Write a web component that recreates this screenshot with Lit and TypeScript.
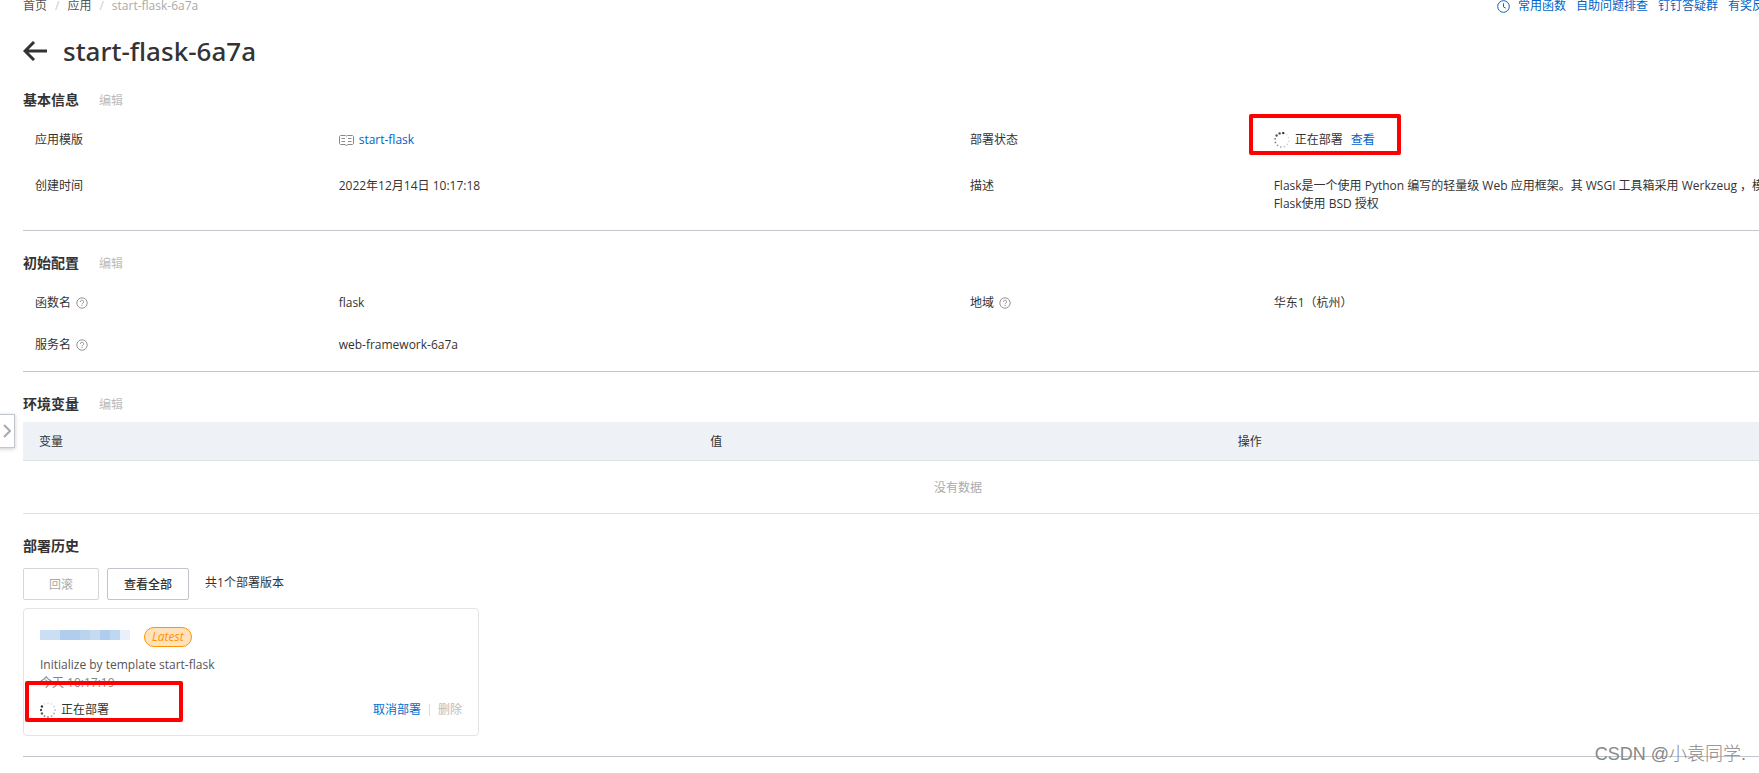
import { LitElement, html, css, svg } from "lit";
import { customElement, property } from "lit/decorators.js";

const DOTS = 12;

@customElement("loading-ring")
class LoadingRing extends LitElement {
  @property({ type: Number }) head = 0;

  static styles = css`
    :host { display: inline-flex; }
    svg { display: block; width: 16px; height: 16px; }
  `;

  render() {
    const dots = Array.from({ length: DOTS }, (_, i) => {
      const angle = ((this.head - i * (360 / DOTS)) * Math.PI) / 180;
      return svg`<circle cx=${8 + 7 * Math.sin(angle)} cy=${8 - 7 * Math.cos(angle)}
        r=${i < 3 ? 1.2 : 0.9} fill="#333" opacity=${Math.max(0.15, 1 - i * 0.1)}></circle>`;
    });
    return html`<svg viewBox="0 0 16 16" aria-hidden="true">${dots}</svg>`;
  }
}

@customElement("help-icon")
class HelpIcon extends LitElement {
  static styles = css`
    :host { display: inline-flex; }
    svg { display: block; width: 12px; height: 12px; }
  `;

  render() {
    return html`<svg viewBox="0 0 12 12" fill="none" stroke="#888" aria-hidden="true">
      <circle cx="6" cy="6" r="5.2" stroke-width="0.9"></circle>
      <path d="M4.4 4.9a1.6 1.6 0 1 1 2.4 1.3c-.5.3-.8.5-.8 1.1" stroke-width="0.9"></path>
      <path d="M6 8.1v1" stroke-width="1"></path>
    </svg>`;
  }
}

@customElement("app-root")
class AppRoot extends LitElement {
  static styles = css`
    :host {
      display: block;
      position: relative;
      overflow: hidden;
      min-height: 100vh;
      background: #fff;
      color: #333;
      font: 12px/18px "Open Sans", "Noto Sans CJK SC", sans-serif;
    }
    * { box-sizing: border-box; }
    a { color: #0064c8; text-decoration: none; }
    button { font: inherit; cursor: pointer; }
    button:disabled { cursor: default; }
    h1, h2, dl, dd, dt, p, ol { margin: 0; padding: 0; font-weight: inherit; }

    .topbar {
      display: flex;
      justify-content: space-between;
      height: 15px;
      align-items: flex-end;
      padding-left: 23px;
      white-space: nowrap;
    }
    .crumbs { display: flex; gap: 8px; list-style: none; color: #aaa; }
    .crumbs a { color: #555; }
    .crumbs .sep { color: #ccc; }
    .help-links { display: flex; align-items: center; gap: 10px; margin-right: -17px; }
    .help-links svg { width: 13px; height: 13px; margin-right: -2px; }

    .page { margin-right: -134px; padding-left: 23px; }
    .title { display: flex; align-items: center; gap: 16px; height: 42px; margin-top: 15px; }
    .title h1 { font-family: "Noto Sans", "Noto Sans CJK SC", sans-serif; font-size: 26px; line-height: 42px; font-weight: 500; }
    .back { display: flex; padding: 0; border: 0; background: none; color: #333; }
    .back svg { width: 24px; height: 20px; }

    .heading { display: flex; align-items: center; gap: 20px; height: 22px; }
    .heading h2 { font-size: 14px; line-height: 22px; font-weight: 700; }
    .plain { padding: 0; border: 0; background: none; color: #bbb; line-height: 18px; }
    .heading .plain { padding-top: 2px; }

    .section { border-bottom: 1px solid #c0c6cc; margin-top: 21px; }
    .section.basic { margin-top: 17px; }
    .section.env { border-bottom: 0; }
    .fields { display: grid; grid-template-columns: 1fr 1fr; }
    .field { display: grid; grid-template-columns: 1fr 2fr; padding: 20px 12px 8px; }
    .basic .fields { padding-bottom: 9px; }
    .config .field { padding: 12px; }
    .config .fields { padding: 8px 0 5px; }
    .label, .value { display: flex; align-items: center; gap: 5px; white-space: nowrap; }
    .field.top .label { align-self: start; }
    .value { position: relative; }
    .value.status { gap: 8px; }
    .mark { position: absolute; border: 4px solid #f00; border-radius: 2px; pointer-events: none; }
    .status .mark { left: -25px; top: -17px; width: 152px; height: 41px; }
    .deploy-state .mark { left: -15px; top: -20px; width: 158px; height: 41px; }
    .state { display: flex; align-items: center; gap: 5px; }
    .book { width: 15px; height: 11px; }

    table { width: 100%; border-collapse: separate; border-spacing: 0; table-layout: fixed; margin-top: 7px; }
    .col-name, .col-action { width: 35.9%; }
    th { height: 39px; padding: 2px 16px 0; background: #eef2f7; font-weight: 400; text-align: left; border-bottom: 1px solid #dfe3e6; }
    td { height: 53px; padding: 2px 0 0; text-align: center; color: #aaa; border-bottom: 1px solid #dfe3e6; }

    .actions { display: flex; gap: 8px; margin-top: 11px; }
    .btn { height: 32px; padding: 2px 16px 0; border: 1px solid #c0c4cc; border-radius: 2px; background: #fff; color: #333; font-weight: 500; }
    .btn:disabled { padding: 2px 25px 0; border-color: #d3d6db; color: #aaa; font-weight: 400; }
    .count { margin: 6px 0 0 8px; }
    .card { width: 456px; margin: 8px 0 20px; padding: 18px 16px 16px; border: 1px solid #e3e4e6; border-radius: 4px; }
    .card-head { display: flex; align-items: center; gap: 14px; }
    .redacted { display: flex; height: 10px; margin-bottom: 4px; }
    .block { width: 10px; }
    .badge { height: 20px; padding: 0 7px; border: 1px solid #ff9300; border-radius: 10px; background: #ffe2bc; color: #ff9300; font-style: italic; }
    .message { margin-top: 9px; color: #555; }
    .time { color: #888; }
    .card-foot { display: flex; justify-content: space-between; align-items: center; margin-top: 9px; }
    .deploy-state { position: relative; }
    .links { display: flex; align-items: center; gap: 8px; }
    .divider { width: 1px; height: 12px; background: #ddd; }
    .cancel { color: #0070cc; }

    .handle { position: absolute; left: -2px; top: 414px; width: 17px; height: 34px; padding: 0; display: flex; align-items: center; justify-content: center; border: 1px solid #c0c6cc; background: #fff; box-shadow: 0 1px 4px #0003; }
    .handle svg { width: 8px; height: 14px; }
    .watermark { position: absolute; right: 13px; bottom: 6px; font: 300 18px/26px "Liberation Sans", "Noto Sans CJK SC", sans-serif; color: #888; }
  `;

  private blocks = ["#cbdff4", "#cbdff4", "#b0cdee", "#b0cdee", "#bad4f0", "#c5daf3", "#b0cdee", "#bfd8f2", "#e7f0fb"];

  private heading(text: string, editable = true) {
    return html`<div class="heading"><h2>${text}</h2>
      ${editable ? html`<button class="plain" disabled>编辑</button>` : ""}</div>`;
  }

  render() {
    return html`
      <header class="topbar">
        <ol class="crumbs">
          <li><a href="#">首页</a></li><li class="sep">/</li>
          <li><a href="#">应用</a></li><li class="sep">/</li>
          <li>start-flask-6a7a</li>
        </ol>
        <nav class="help-links">
          <svg viewBox="0 0 13 13" fill="none" stroke="#0064c8" aria-hidden="true">
            <circle cx="6.5" cy="6.5" r="5.8"></circle><path d="M6.5 3.3v3.6l2.2 1.2"></path>
          </svg>
          <a href="#">常用函数</a><a href="#">自助问题排查</a><a href="#">钉钉答疑群</a><a href="#">有奖反馈</a>
        </nav>
      </header>

      <main class="page">
        <div class="title">
          <button class="back" aria-label="返回">
            <svg viewBox="0 0 24 20" fill="none" stroke="currentColor" stroke-width="3">
              <path d="M24 10H2M11 1L2 10l9 9"></path>
            </svg>
          </button>
          <h1>start-flask-6a7a</h1>
        </div>

        <section class="section basic">
          ${this.heading("基本信息")}
          <dl class="fields">
            <div class="field"><dt class="label">应用模版</dt>
              <dd class="value">
                <svg class="book" viewBox="0 0 15 11" fill="none" stroke="#888" aria-hidden="true">
                  <path d="M1.5 .5h5l1 .6 1-.6h5l1 1v7l-1 1h-4.500l-1.500 1-1.500-1h-4.500l-1-1v-7z"></path>
                  <path d="M2.500 3.500H6M2.500 6.500H6M9 3.500h3.500M9 6.500h3.500"></path>
                </svg>
                <a href="#">start-flask</a>
              </dd></div>
            <div class="field"><dt class="label">部署状态</dt>
              <dd class="value status">
                <span class="state"><loading-ring .head=${10}></loading-ring>正在部署</span>
                <a href="#">查看</a>
                <span class="mark"></span>
              </dd></div>
            <div class="field top"><dt class="label">创建时间</dt><dd class="label">2022年12月14日 10:17:18</dd></div>
            <div class="field top"><dt class="label">描述</dt>
              <dd class="value"><p>Flask是一个使用 Python 编写的轻量级 Web 应用框架。其 WSGI 工具箱采用 Werkzeug ，模板<br>Flask使用 BSD 授权</p></dd></div>
          </dl>
        </section>

        <section class="section config">
          ${this.heading("初始配置")}
          <dl class="fields">
            <div class="field"><dt class="label">函数名 <help-icon></help-icon></dt><dd class="value">flask</dd></div>
            <div class="field"><dt class="label">地域 <help-icon></help-icon></dt><dd class="value">华东1（杭州）</dd></div>
            <div class="field"><dt class="label">服务名 <help-icon></help-icon></dt><dd class="value">web-framework-6a7a</dd></div>
          </dl>
        </section>

        <section class="section env">
          ${this.heading("环境变量")}
          <table>
            <colgroup><col class="col-name"><col><col class="col-action"></colgroup>
            <thead><tr><th>变量</th><th>值</th><th>操作</th></tr></thead>
            <tbody><tr><td colspan="3">没有数据</td></tr></tbody>
          </table>
        </section>

        <section class="section">
          ${this.heading("部署历史", false)}
          <div class="actions">
            <button class="btn" disabled>回滚</button>
            <button class="btn">查看全部</button>
            <p class="count">共1个部署版本</p>
          </div>
          <article class="card">
            <div class="card-head">
              <div class="redacted">${this.blocks.map((c) => html`<span class="block" style="background:${c}"></span>`)}</div>
              <span class="badge">Latest</span>
            </div>
            <p class="message">Initialize by template start-flask</p>
            <p class="time">今天 10:17:19</p>
            <div class="card-foot">
              <span class="state deploy-state"><loading-ring .head=${300}></loading-ring>正在部署<span class="mark"></span></span>
              <span class="links"><a class="cancel" href="#">取消部署</a><i class="divider"></i><button class="plain" disabled>删除</button></span>
            </div>
          </article>
        </section>
      </main>

      <button class="handle" aria-label="展开侧栏">
        <svg viewBox="0 0 8 14" fill="none" stroke="#aaa" stroke-width="2"><path d="M1 1l6 6-6 6"></path></svg>
      </button>
      <div class="watermark">CSDN @小袁同学.</div>
    `;
  }
}
